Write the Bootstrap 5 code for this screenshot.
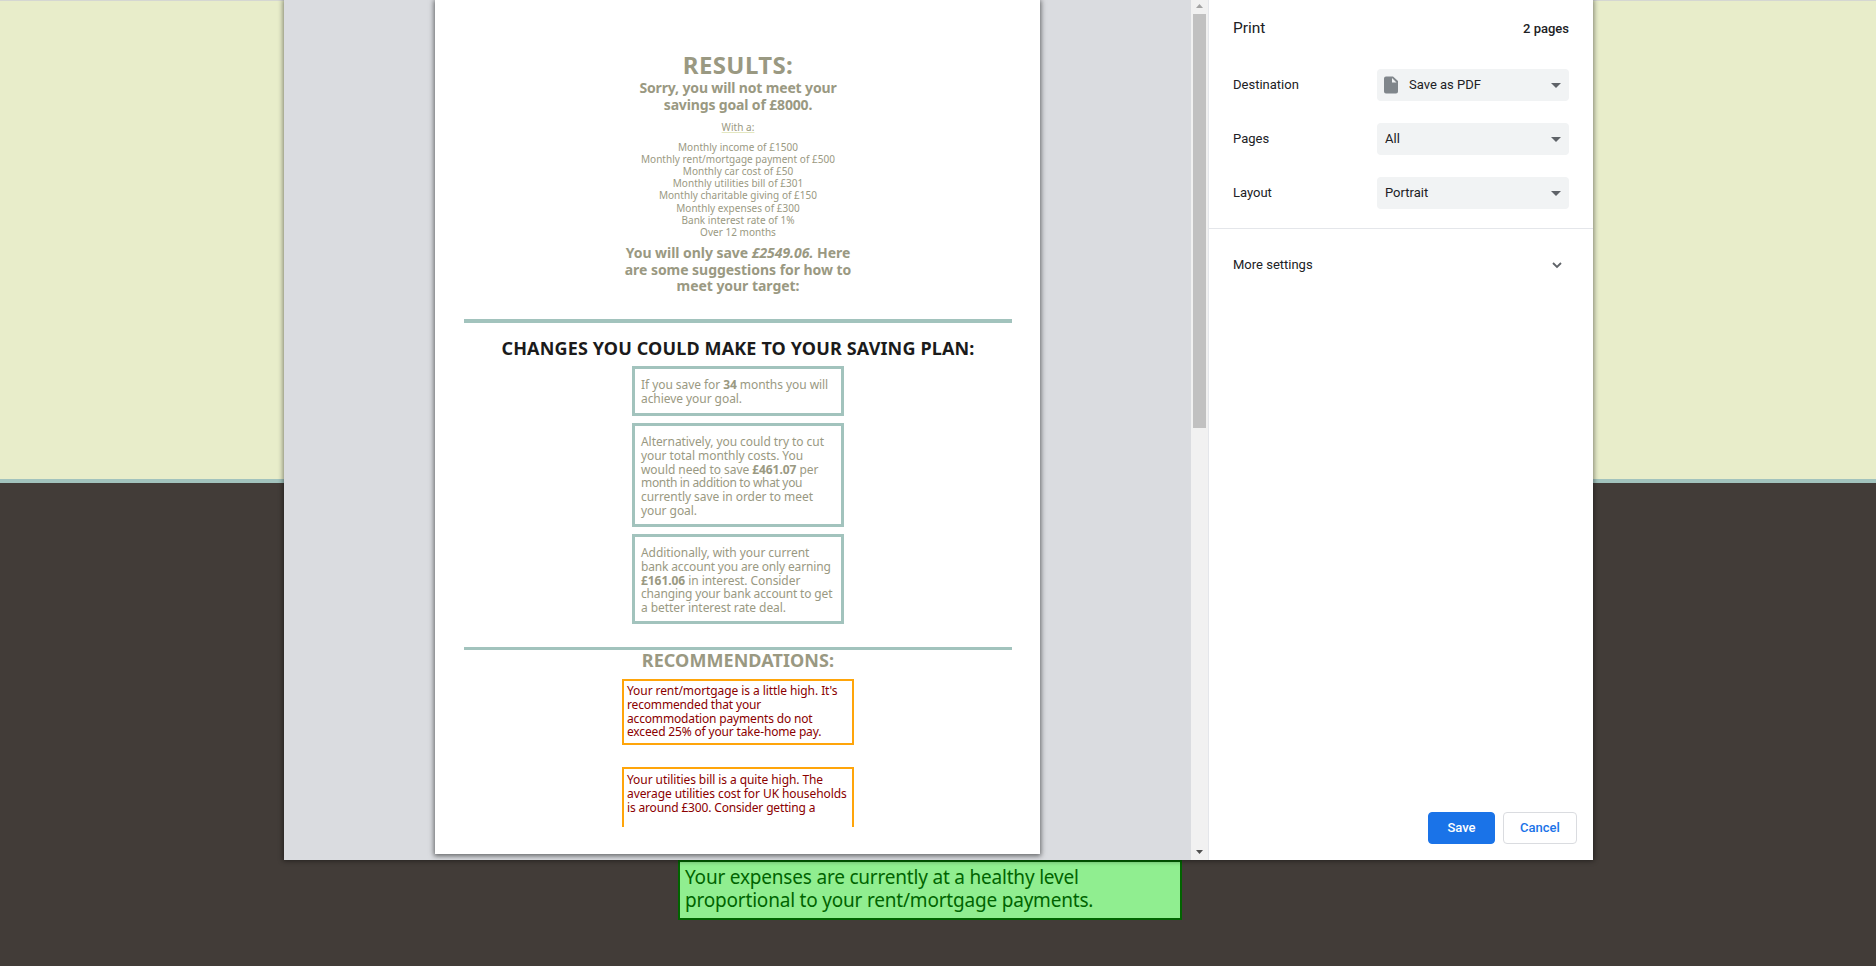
<!DOCTYPE html>
<html lang="en">
<head>
<meta charset="utf-8">
<title>Savings calculator</title>
<link href="https://cdn.jsdelivr.net/npm/bootstrap@5.3.0/dist/css/bootstrap.min.css" rel="stylesheet">
<style>
body{height:966px;overflow:hidden;background:#423c38;font-family:"Noto Sans","Open Sans",sans-serif}
.backdrop-top{height:483px;background:#e8edca;border-top:1px solid #d5d7d2;border-bottom:4px solid #a2c3bd}
.healthy{position:absolute;left:678px;top:860px;width:504px;height:60px;background:#90ee90;border:2px solid #006400;color:#006400;font-size:19px;line-height:23px;letter-spacing:-.2px;padding:4px 5px;white-space:nowrap}
.print-dialog{position:absolute;left:284px;top:0;width:1309px;height:860px;background:#fff;box-shadow:0 0 5px 1px rgba(0,0,0,.45)}
.preview{width:907px;background:#dadce0;overflow:hidden}
.sheet{width:605px;height:854px;margin-left:151px;background:#fff;box-shadow:0 1px 5px 1px rgba(0,0,0,.55);color:#9a9982;padding:0 28px 0 29px;white-space:nowrap}
.sheet h1,.sheet h2,.sheet p,.sheet ul{margin:0}
.sheet h1{font-size:24px;font-weight:700;line-height:30px;padding-top:50px;letter-spacing:.4px}
.sheet h2{font-size:14px;font-weight:700;line-height:16.5px;letter-spacing:-.04px}
.sheet .goal{letter-spacing:-.15px}
.inputs{font-size:10px;line-height:12.1px;letter-spacing:.03px}
.with-a{padding-top:8px;text-decoration:underline #e3e7c0}
.rule{height:4px;background:#a2c3bd}
.rule.thin{height:3px;margin-top:23px}
.sheet .changes{color:#1b1b1b;font-size:18px;line-height:24px;letter-spacing:.14px;margin:13px 0 6px}
.sheet .recs{font-size:18px;line-height:21px;letter-spacing:.07px;margin-bottom:8px}
.suggestion{width:212px;border:3px solid #a2c3bd;font-size:12px;line-height:13.8px;letter-spacing:-.06px;text-align:left;padding:9px 0 0 6px;margin:0 auto 7px}
.warning{width:232px;border:2px solid #ffa50a;font-size:12px;line-height:13.8px;letter-spacing:-.08px;text-align:left;color:#8b0000;padding:3px 0 0 3px;margin:0 auto}
.tight{letter-spacing:-.16px}
.tighter{letter-spacing:-.33px}
.scroller{width:17px;background:#f1f1f1}
.thumb{width:13px;height:414px;margin-top:14px;background:#c1c1c1}
.settings{width:385px;border-left:1px solid #e4e6ea;font-family:Roboto,sans-serif;font-size:13px;color:#202124;background:#fff}
.setting-row{height:54px;padding:0 24px}
.picker{width:192px;height:32px;background:#f1f3f4;border-radius:4px;padding:0 8px}
.dlg-btn{height:32px;font-size:13px;font-weight:500;border-radius:4px;padding:0;line-height:30px}
</style>
</head>
<body>
<div class="backdrop-top"></div>
<div class="healthy">Your expenses are currently at a healthy level<br>proportional to your rent/mortgage payments.</div>

<main class="print-dialog d-flex">
  <section class="preview">
    <article class="sheet text-center">
      <h1>RESULTS:</h1>
      <h2 class="goal">Sorry, you will not meet your<br>savings goal of £8000.</h2>
      <p class="inputs with-a">With a:</p>
      <ul class="inputs list-unstyled" style="padding-top:8px">
        <li>Monthly income of £1500</li>
        <li>Monthly rent/mortgage payment of £500</li>
        <li>Monthly car cost of £50</li>
        <li>Monthly utilities bill of £301</li>
        <li>Monthly charitable giving of £150</li>
        <li>Monthly expenses of £300</li>
        <li>Bank interest rate of 1%</li>
        <li>Over 12 months</li>
      </ul>
      <h2 style="padding-top:7.600px">You will only save <em>£2549.06.</em> Here<br>are some suggestions for how to<br>meet your target:</h2>
      <div class="rule" style="margin-top:24px"></div>
      <h2 class="changes">CHANGES YOU COULD MAKE TO YOUR SAVING PLAN:</h2>
      <div class="suggestion" style="height:50px">If you save for <b>34</b> months you will<br>achieve your goal.</div>
      <div class="suggestion" style="height:104px">Alternatively, you could try to cut<br>your total monthly costs. You<br>would need to save <b>£461.07</b> per<br><span class="tighter">month in addition to what you</span><br>currently save in order to meet<br>your goal.</div>
      <div class="suggestion" style="height:90px">Additionally, with your current<br><span class="tight">bank account you are only earning</span><br><b>£161.06</b> in interest. Consider<br><span class="tight">changing your bank account to get</span><br>a better interest rate deal.</div>
      <div class="rule thin"></div>
      <h2 class="recs">RECOMMENDATIONS:</h2>
      <div class="warning" style="height:66px">Your rent/mortgage is a little high. It's<br><span class="tight">recommended that your</span><br><span class="tight">accommodation payments do not</span><br><span class="tight">exceed 25% of your take-home pay.</span></div>
      <div class="warning border-bottom-0" style="height:60px;margin-top:22px;padding-top:4px">Your utilities bill is a quite high. The<br>average utilities cost for UK households<br><span class="tight">is around £300. Consider getting a</span></div>
    </article>
  </section>
  <div class="scroller position-relative d-flex flex-column align-items-center justify-content-between">
    <svg class="position-absolute top-0" width="17" height="14"><path d="M5 8h7L8.500 4z" fill="#a3a3a3"/></svg>
    <div class="thumb"></div>
    <svg width="17" height="14"><path d="M5 4h7L8.500 8z" fill="#505050"/></svg>
  </div>
  <aside class="settings d-flex flex-column">
    <div class="d-flex justify-content-between align-items-center" style="height:57px;padding:0 24px"><span style="font-size:15.500px">Print</span><span style="font-weight:500">2 pages</span></div>
    <div class="setting-row d-flex justify-content-between align-items-center" style="height:55px;padding-top:1px"><span>Destination</span>
      <div class="picker d-flex align-items-center"><svg width="14" height="18" viewBox="0 0 14 18" style="margin:0 11px 0 -1px"><path d="M2 .5h7L14 5v10.500a2 2 0 0 1-2 2H2a2 2 0 0 1-2-2v-13a2 2 0 0 1 2-2z" fill="#80868b"/><path d="M8 2v4.500h4.500z" fill="#f1f3f4"/></svg><span class="flex-grow-1">Save as PDF</span><svg width="10" height="5"><path d="M0 0h10L5 5z" fill="#5f6368"/></svg></div></div>
    <div class="setting-row d-flex justify-content-between align-items-center"><span>Pages</span>
      <div class="picker d-flex align-items-center justify-content-between"><span>All</span><svg width="10" height="5"><path d="M0 0h10L5 5z" fill="#5f6368"/></svg></div></div>
    <div class="setting-row d-flex justify-content-between align-items-center"><span>Layout</span>
      <div class="picker d-flex align-items-center justify-content-between"><span>Portrait</span><svg width="10" height="5"><path d="M0 0h10L5 5z" fill="#5f6368"/></svg></div></div>
    <div style="height:9px;border-bottom:1px solid #e4e6ea"></div>
    <div class="d-flex justify-content-between align-items-center" style="height:72px;padding:0 31px 0 24px"><span>More settings</span><svg width="10" height="7"><path d="M1 1l4 4 4-4" fill="none" stroke="#5f6368" stroke-width="1.8"/></svg></div>
    <div class="d-flex justify-content-end gap-2 mt-auto" style="padding:0 16px 16px 0"><button class="btn btn-primary dlg-btn" style="width:67px;background:#1a73e8;border-color:#1a73e8">Save</button><button class="btn dlg-btn" style="width:74px;border:1px solid #dadce0;color:#1a73e8">Cancel</button></div>
  </aside>
</main>
</body>
</html>
